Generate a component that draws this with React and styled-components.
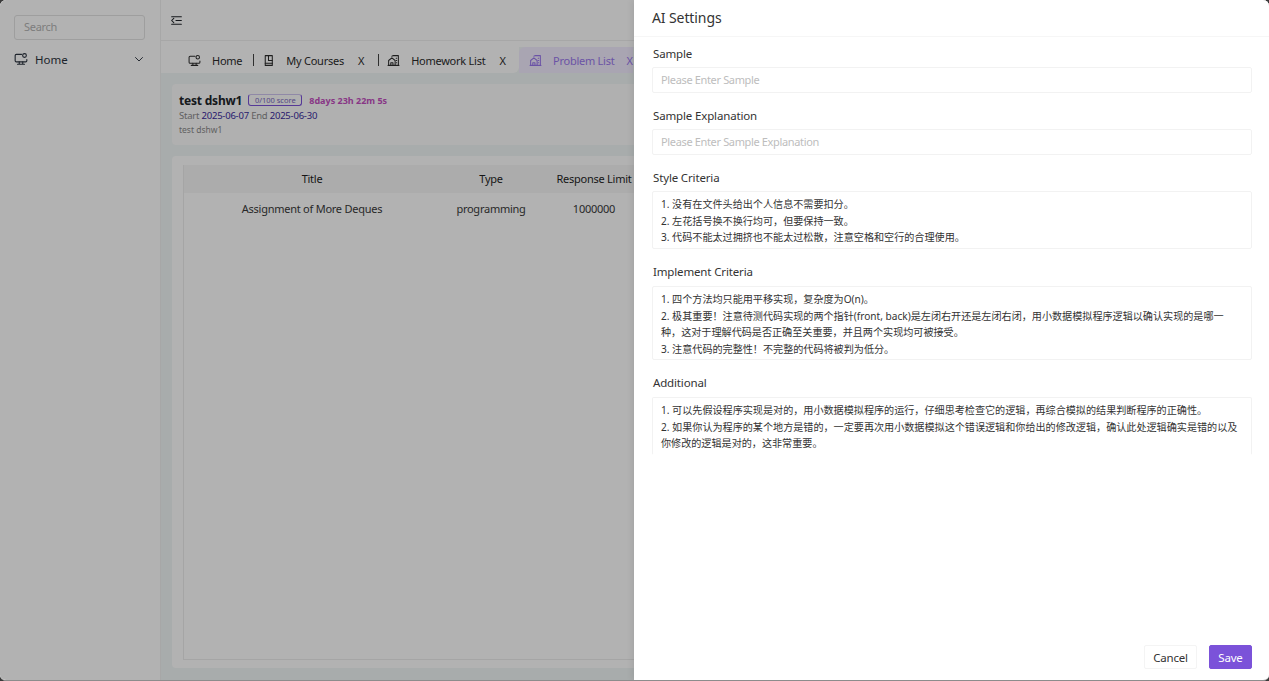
import React from "react";
import styled, { createGlobalStyle } from "styled-components";

const FONT = `"Noto Sans", "Noto Sans CJK SC", sans-serif`;
const PURPLE = "#7b52d9";

const styleCriteria = `1. 没有在文件头给出个人信息不需要扣分。
2. 左花括号换不换行均可，但要保持一致。
3. 代码不能太过拥挤也不能太过松散，注意空格和空行的合理使用。`;

const implementCriteria = `1. 四个方法均只能用平移实现，复杂度为O(n)。
2. 极其重要！注意待测代码实现的两个指针(front, back)是左闭右开还是左闭右闭，用小数据模拟程序逻辑以确认实现的是哪一种，这对于理解代码是否正确至关重要，并且两个实现均可被接受。
3. 注意代码的完整性！不完整的代码将被判为低分。`;

const additionalCriteria = `1. 可以先假设程序实现是对的，用小数据模拟程序的运行，仔细思考检查它的逻辑，再综合模拟的结果判断程序的正确性。
2. 如果你认为程序的某个地方是错的，一定要再次用小数据模拟这个错误逻辑和你给出的修改逻辑，确认此处逻辑确实是错的以及你修改的逻辑是对的，这非常重要。`;

const GlobalStyle = createGlobalStyle`
  html, body {
    margin: 0;
    height: 100%;
    overflow: hidden;
    background: #3a3a3a;
  }
  #root {
    height: 100%;
  }
  * {
    box-sizing: border-box;
  }
`;

const Screen = styled.div`
  position: relative;
  width: 1269px;
  height: 681px;
  display: flex;
  overflow: hidden;
  border-radius: 6px;
  border-bottom: 1px solid #8c8c8c;
  font-family: ${FONT};
  color: #1f2329;
  background: #fff;
`;

const Sidebar = styled.aside`
  width: 161px;
  flex: none;
  padding: 15px 15px 0 14px;
  background: #fff;
  border-right: 1px solid #f0f0f0;
`;

const SearchBox = styled.div`
  height: 25px;
  display: flex;
  align-items: center;
  padding: 0 0 2px 9px;
  font-size: 11px;
  letter-spacing: -0.3px;
  color: #b4b4b4;
  border: 1px solid #e2e2e2;
  border-radius: 3px;
`;

const MenuRow = styled.div`
  margin-top: 10px;
  height: 18px;
  display: flex;
  align-items: center;
  gap: 7px;
  font-size: 11.5px;
  color: #2c3440;
  svg.chevron {
    margin-left: auto;
  }
`;

const Main = styled.main`
  flex: 1;
  min-width: 0;
  display: flex;
  flex-direction: column;
  background: #f1f7f7;
`;

const TopBar = styled.header`
  height: 41px;
  flex: none;
  display: flex;
  align-items: center;
  padding-left: 9px;
  background: #fff;
  border-bottom: 1px solid #f0f0f0;
`;

const TabBar = styled.nav`
  height: 32px;
  flex: none;
  display: flex;
  align-items: flex-end;
  border-top: 6px solid #fff;
`;

const TabStrip = styled.div`
  width: 358px;
  height: 26px;
  flex: none;
  display: flex;
  align-items: center;
  padding-left: 27px;
  background: #fff;
  border-radius: 0 0 6px 0;
`;

const Tab = styled.div`
  height: 26px;
  flex: none;
  display: flex;
  align-items: center;
  font-size: 11px;
  letter-spacing: -0.25px;
  color: ${(p) => (p.$active ? "#9a78ee" : "#2c2c2c")};
  background: ${(p) => (p.$active ? "#f3ecff" : "transparent")};
  border-radius: ${(p) => (p.$active ? "6px 0 0 0" : "0")};
  padding-left: ${(p) => (p.$active ? "10px" : "0")};
  svg {
    flex: none;
  }
`;

const TabLabel = styled.span`
  margin-left: 11px;
  white-space: nowrap;
`;

const TabClose = styled.span`
  margin-left: ${(p) => p.$gap || 14}px;
`;

const Divider = styled.span`
  width: 1px;
  height: 12px;
  flex: none;
  margin: 0 ${(p) => p.$right}px 0 ${(p) => p.$left}px;
  background: #444;
`;

const Content = styled.div`
  flex: 1;
  display: flex;
  flex-direction: column;
  gap: 11px;
  padding: 11px 11px 12px;
  min-height: 0;
`;

const InfoCard = styled.section`
  height: 61px;
  flex: none;
  padding: 8px 7px;
  background: #fcfcfc;
  border-radius: 4px;
`;

const TitleRow = styled.div`
  display: flex;
  align-items: center;
  height: 16px;
`;

const CardTitle = styled.h2`
  margin: 0;
  font-size: 12px;
  font-weight: 700;
  letter-spacing: -0.2px;
  color: #20242a;
`;

const ScoreBadge = styled.span`
  margin-left: 6px;
  height: 12px;
  width: 54px;
  display: flex;
  align-items: center;
  justify-content: center;
  font-size: 7.5px;
  color: #7a68c0;
  border: 1px solid ${PURPLE};
  border-top-color: #cfc4ef;
  border-radius: 3px;
`;

const Countdown = styled.span`
  margin-left: 7px;
  font-size: 9px;
  font-weight: 700;
  color: #c34fc0;
`;

const DateRow = styled.div`
  margin-top: 1px;
  font-size: 9.5px;
  line-height: 13px;
  letter-spacing: -0.22px;
  color: #8b8b8b;
  b {
    font-weight: 400;
    color: #3a2b9e;
  }
`;

const Note = styled.div`
  margin-top: 1px;
  font-size: 8.5px;
  line-height: 13px;
  color: #8b8b8b;
`;

const TableCard = styled.section`
  flex: 1;
  padding: 9px 0 8px 11px;
  background: #fff;
  border-radius: 4px;
  min-height: 0;
`;

const TableFrame = styled.div`
  height: 100%;
  border-left: 1px solid #ececec;
  border-bottom: 1px solid #ececec;
`;

const TableRow = styled.div`
  display: grid;
  grid-template-columns: 256px 102px 104px;
  height: ${(p) => (p.$head ? 28 : 32)}px;
  padding-bottom: 2px;
  align-items: center;
  text-align: center;
  font-size: 11px;
  letter-spacing: -0.25px;
  white-space: nowrap;
  background: ${(p) => (p.$head ? "#f7f7f7" : "transparent")};
  color: ${(p) => (p.$head ? "#1f1f1f" : "#3a3a3a")};
`;

const Backdrop = styled.div`
  position: absolute;
  inset: 0;
  background: rgba(0, 0, 0, 0.3);
`;

const Drawer = styled.aside`
  position: absolute;
  top: 0;
  right: 0;
  bottom: 0;
  width: 635px;
  display: flex;
  flex-direction: column;
  background: #fff;
  box-shadow: -2px 0 6px rgba(0, 0, 0, 0.08);
`;

const DrawerHead = styled.header`
  height: 37px;
  flex: none;
  display: flex;
  align-items: center;
  padding: 0 0 2px 18px;
  font-size: 14px;
  letter-spacing: -0.1px;
  color: #333;
  border-bottom: 1px solid #f6f6f6;
`;

const Form = styled.form`
  flex: 1;
  display: flex;
  flex-direction: column;
  padding: 9px 17px 0 18px;
  min-height: 0;
`;

const Field = styled.label`
  display: block;
  margin-bottom: ${(p) => p.$after}px;
`;

const FieldLabel = styled.span`
  display: block;
  height: ${(p) => p.$height || 21}px;
  padding-left: 1px;
  font-size: 11.5px;
  line-height: 16px;
  letter-spacing: -0.15px;
  color: #333;
`;

const TextInput = styled.input`
  display: block;
  width: 100%;
  height: 26px;
  padding: 0 8px 2px;
  font-family: ${FONT};
  font-size: 11px;
  letter-spacing: -0.35px;
  color: #333;
  border: 1px solid #f2f2f2;
  border-radius: 2px;
  outline: none;
  &::placeholder {
    color: #bdbdbd;
  }
`;

const TextArea = styled.textarea`
  display: block;
  width: 100%;
  height: ${(p) => p.$height}px;
  padding: 4px 8px 0;
  resize: none;
  overflow: hidden;
  font-family: ${FONT};
  font-size: 10.1px;
  line-height: 16.5px;
  color: #333;
  border: 1px solid #f2f2f2;
  border-bottom-color: ${(p) => (p.$open ? "transparent" : "#f2f2f2")};
  border-radius: 2px;
  outline: none;
`;

const DrawerFoot = styled.footer`
  flex: none;
  display: flex;
  justify-content: flex-end;
  gap: 12px;
  padding: 0 17px 11px 0;
`;

const FootButton = styled.button`
  height: 24px;
  width: ${(p) => (p.$primary ? 43 : 53)}px;
  padding: 0;
  font-family: ${FONT};
  font-size: 11.5px;
  letter-spacing: -0.2px;
  color: ${(p) => (p.$primary ? "#fff" : "#333")};
  background: ${(p) => (p.$primary ? PURPLE : "#fff")};
  border: 1px solid ${(p) => (p.$primary ? PURPLE : "#f4f4f4")};
  border-radius: 2px;
`;

const Icon = ({ size = 14, children, className }) => (
  <svg
    className={className}
    width={size}
    height={size}
    viewBox="0 0 24 24"
    fill="none"
    stroke="currentColor"
    strokeWidth="1.9"
    strokeLinecap="round"
    strokeLinejoin="round"
  >
    {children}
  </svg>
);

const MonitorGear = ({ size }) => (
  <Icon size={size}>
    <path d="M13 4H4a2 2 0 0 0-2 2v9a2 2 0 0 0 2 2h16a2 2 0 0 0 2-2v-2" />
    <path d="M9 17v4M15 17v4M6 21h12" />
    <circle cx="18" cy="6" r="3.2" />
  </Icon>
);

const BookIcon = () => (
  <Icon size={13}>
    <path d="M6 3h13v18H6z" />
    <path d="M6 17h13" />
    <path d="M12 3v9h7" />
  </Icon>
);

const BuildingIcon = () => (
  <Icon size={13}>
    <path d="M2 21h20" />
    <path d="M3 21v-9l6-5 6 5v9" />
    <path d="M9 4l2-1h10v18" />
    <path d="M7 21v-5h4v5" />
    <path d="M17 8h1M17 12h1M17 16h1" />
  </Icon>
);

const IndentIcon = () => (
  <Icon size={13}>
    <path d="M21 5H3" />
    <path d="M21 12h-10" />
    <path d="M21 19H3" />
    <path d="M7 8l-4 4 4 4" />
  </Icon>
);

const Chevron = () => (
  <Icon className="chevron" size={12}>
    <path d="M5 9l7 7 7-7" />
  </Icon>
);

const App = () => {
  return (
    <>
      <GlobalStyle />
      <Screen>
        <Sidebar>
          <SearchBox>Search</SearchBox>
          <MenuRow>
            <MonitorGear size={14} />
            Home
            <Chevron />
          </MenuRow>
        </Sidebar>

        <Main>
          <TopBar>
            <IndentIcon />
          </TopBar>
          <TabBar>
            <TabStrip>
              <Tab>
                <MonitorGear size={13} />
                <TabLabel>Home</TabLabel>
              </Tab>
              <Divider $left={11} $right={8} />
              <Tab>
                <BookIcon />
                <TabLabel>My Courses</TabLabel>
                <TabClose>X</TabClose>
              </Tab>
              <Divider $left={14} $right={8} />
              <Tab>
                <BuildingIcon />
                <TabLabel>Homework List</TabLabel>
                <TabClose>X</TabClose>
              </Tab>
            </TabStrip>
            <Tab $active>
              <BuildingIcon />
              <TabLabel>Problem List</TabLabel>
              <TabClose $gap={12}>X</TabClose>
            </Tab>
          </TabBar>

          <Content>
            <InfoCard>
              <TitleRow>
                <CardTitle>test dshw1</CardTitle>
                <ScoreBadge>0/100 score</ScoreBadge>
                <Countdown>8days 23h 22m 5s</Countdown>
              </TitleRow>
              <DateRow>
                Start <b>2025-06-07</b> End <b>2025-06-30</b>
              </DateRow>
              <Note>test dshw1</Note>
            </InfoCard>

            <TableCard>
              <TableFrame>
                <TableRow $head>
                  <span>Title</span>
                  <span>Type</span>
                  <span>Response Limit</span>
                </TableRow>
                <TableRow>
                  <span>Assignment of More Deques</span>
                  <span>programming</span>
                  <span>1000000</span>
                </TableRow>
              </TableFrame>
            </TableCard>
          </Content>
        </Main>

        <Backdrop />

        <Drawer>
          <DrawerHead>AI Settings</DrawerHead>
          <Form>
            <Field $after={15}>
              <FieldLabel>Sample</FieldLabel>
              <TextInput placeholder="Please Enter Sample" />
            </Field>
            <Field $after={15}>
              <FieldLabel>Sample Explanation</FieldLabel>
              <TextInput placeholder="Please Enter Sample Explanation" />
            </Field>
            <Field $after={15}>
              <FieldLabel>Style Criteria</FieldLabel>
              <TextArea $height={58} defaultValue={styleCriteria} />
            </Field>
            <Field $after={15}>
              <FieldLabel $height={22}>Implement Criteria</FieldLabel>
              <TextArea $height={74} defaultValue={implementCriteria} />
            </Field>
            <Field $after={0}>
              <FieldLabel $height={22}>Additional</FieldLabel>
              <TextArea $open $height={58} defaultValue={additionalCriteria} />
            </Field>
          </Form>
          <DrawerFoot>
            <FootButton type="button">Cancel</FootButton>
            <FootButton type="button" $primary>
              Save
            </FootButton>
          </DrawerFoot>
        </Drawer>
      </Screen>
    </>
  );
};

export default App;
